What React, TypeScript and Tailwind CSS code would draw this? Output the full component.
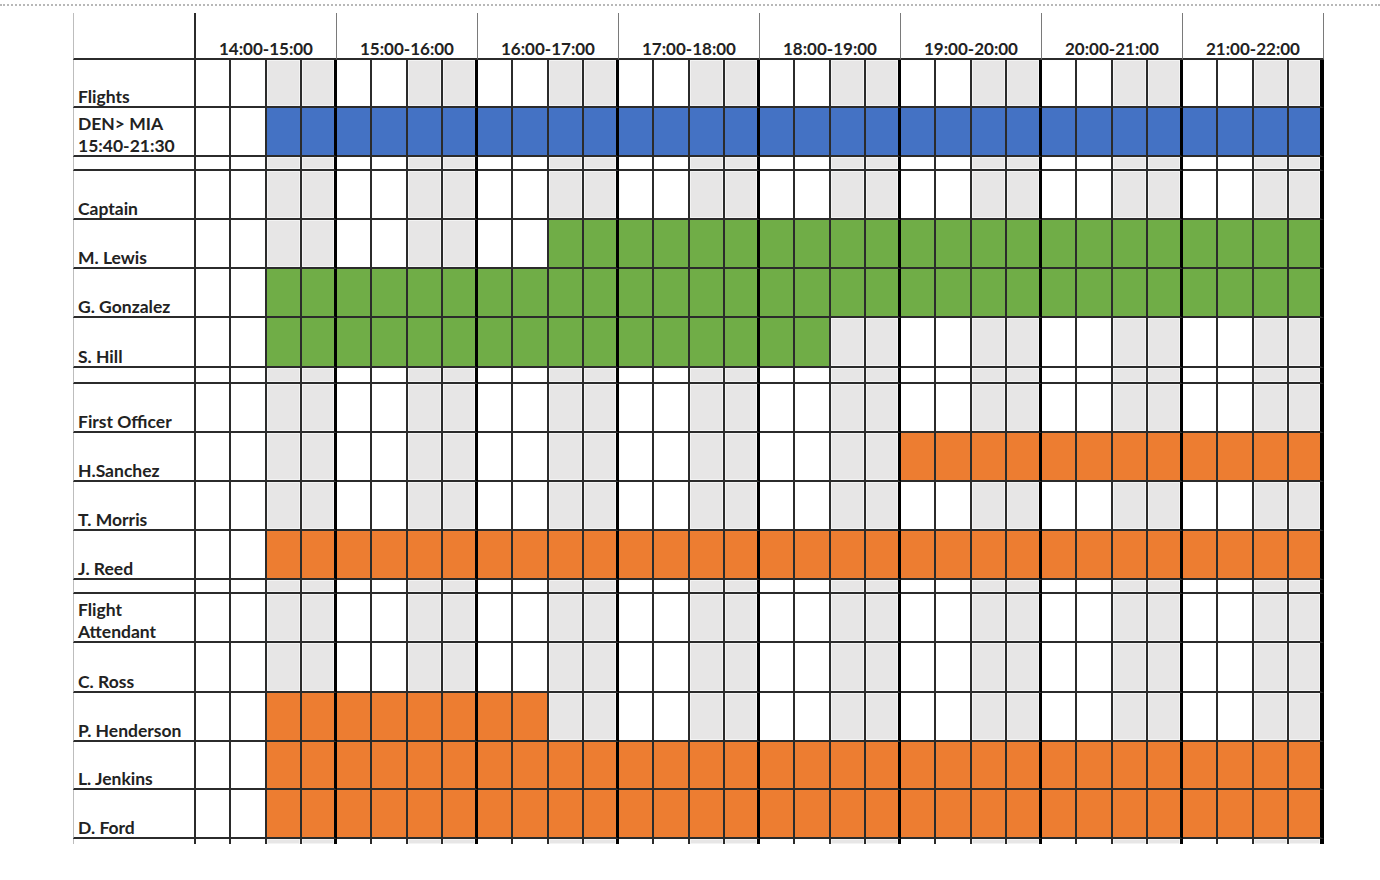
import React from "react"

type Fill = { from: number; to: number; color: "blue" | "green" | "orange" }

interface Row {
  label?: string[]
  h: string
  fill?: Fill
  kind?: "spacer" | "tail"
}

const HOURS = [
  "14:00-15:00",
  "15:00-16:00",
  "16:00-17:00",
  "17:00-18:00",
  "18:00-19:00",
  "19:00-20:00",
  "20:00-21:00",
  "21:00-22:00",
]

// quarter index: 14:00 -> 0, 15:00 -> 4 ... 21:45 -> 31, `to` is exclusive
const ROWS: Row[] = [
  { label: ["Flights"], h: "h-[48px]" },
  { label: ["DEN> MIA", "15:40-21:30"], h: "h-[49px]", fill: { from: 2, to: 32, color: "blue" } },
  { kind: "spacer", h: "h-[14px]" },
  { label: ["Captain"], h: "h-[49px]" },
  { label: ["M. Lewis"], h: "h-[49px]", fill: { from: 10, to: 32, color: "green" } },
  { label: ["G. Gonzalez"], h: "h-[49px]", fill: { from: 2, to: 32, color: "green" } },
  { label: ["S. Hill"], h: "h-[50px]", fill: { from: 2, to: 18, color: "green" } },
  { kind: "spacer", h: "h-[16px]" },
  { label: ["First Officer"], h: "h-[49px]" },
  { label: ["H.Sanchez"], h: "h-[49px]", fill: { from: 20, to: 32, color: "orange" } },
  { label: ["T. Morris"], h: "h-[49px]" },
  { label: ["J. Reed"], h: "h-[49px]", fill: { from: 2, to: 32, color: "orange" } },
  { kind: "spacer", h: "h-[14px]" },
  { label: ["Flight", "Attendant"], h: "h-[49px]" },
  { label: ["C. Ross"], h: "h-[50px]" },
  { label: ["P. Henderson"], h: "h-[49px]", fill: { from: 2, to: 10, color: "orange" } },
  { label: ["L. Jenkins"], h: "h-[48px]", fill: { from: 2, to: 32, color: "orange" } },
  { label: ["D. Ford"], h: "h-[49px]", fill: { from: 2, to: 32, color: "orange" } },
  { kind: "tail", h: "h-[5px]" },
]

const FILL_BG = {
  blue: "bg-[#4472c4]",
  green: "bg-[#70ad47]",
  orange: "bg-[#ed7d31]",
}

const GRID = "grid grid-cols-[123px_repeat(32,minmax(0,1fr))]"

const Cell = ({ index, row }: { index: number; row: Row }) => {
  const filled = row.fill && index >= row.fill.from && index < row.fill.to
  const shaded = index % 4 >= 2
  const hourEnd = index % 4 === 3
  const last = index === 31

  let bg = "bg-white"
  if (filled && row.fill) bg = FILL_BG[row.fill.color]
  else if (shaded) bg = "bg-[#e7e6e6] shadow-[inset_0_0_0_1px_#f3f3f3]"

  const right = last
    ? "border-r-4 border-r-black"
    : hourEnd
      ? "border-r-[3px] border-r-black"
      : "border-r-2 border-r-[#2b2b2b]"
  const bottom = row.kind === "tail" ? "" : "border-b-2 border-b-[#2b2b2b]"

  return <div className={`${bg} ${right} ${bottom}`} />
}

const ScheduleRow = ({ row }: { row: Row }) => (
  <div className={`${GRID} ${row.h}`}>
    <div
      className={`flex items-end border-l border-l-[#bdbdbd] border-r-2 border-r-[#2b2b2b] pl-[4px] ${
        row.kind === "tail" ? "" : "border-b-2 border-b-[#2b2b2b]"
      }`}
    >
      {row.label && (
        <div className="translate-y-[2px] text-[17.5px] leading-[22px] font-bold whitespace-nowrap">
          {row.label.map((line) => (
            <div key={line}>{line}</div>
          ))}
        </div>
      )}
    </div>
    {Array.from({ length: 32 }, (_, i) => (
      <Cell key={i} index={i} row={row} />
    ))}
  </div>
)

const App = () => {
  return (
    <div className="min-h-[880px] w-full bg-white pt-[4px] font-['Lato',_sans-serif] text-[#222]">
      <div className="border-t-2 border-dotted border-t-[#b8b8b8]" />
      <div className="mt-[7px] ml-[73px] w-[1251px]">
        {/* header: hour ranges span four quarter columns each */}
        <div className={`${GRID} h-[47px]`}>
          <div className="border-l border-l-[#bdbdbd] border-r-2 border-r-[#2b2b2b] border-b-2 border-b-[#2b2b2b]" />
          {HOURS.map((hour) => (
            <div
              key={hour}
              className="col-span-4 flex items-end justify-center border-r border-r-[#7a7a7a] border-b-2 border-b-[#2b2b2b]"
            >
              <span className="translate-y-[2px] text-[17px] leading-[22px] font-bold">
                {hour}
              </span>
            </div>
          ))}
        </div>
        {ROWS.map((row, i) => (
          <ScheduleRow key={i} row={row} />
        ))}
      </div>
    </div>
  )
}

export default App
